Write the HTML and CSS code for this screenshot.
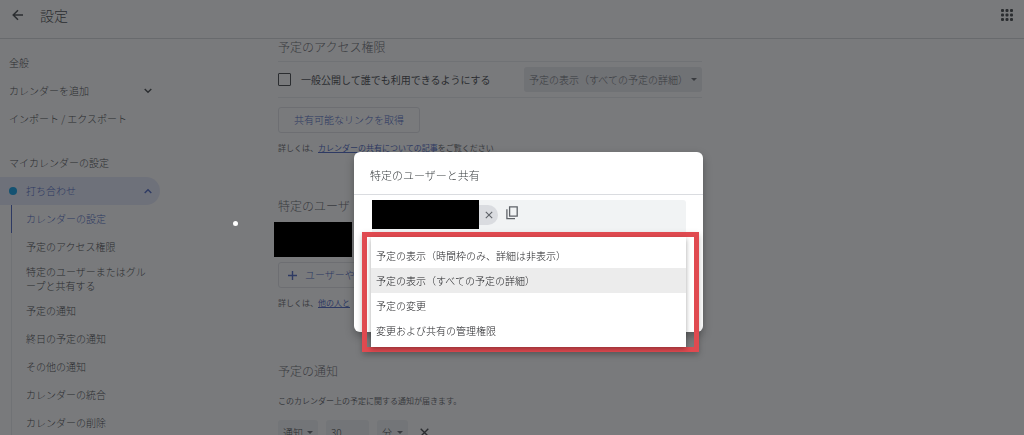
FILE: index.html
```html
<!DOCTYPE html>
<html lang="ja">
<head>
    <meta charset="UTF-8">
    <meta name="viewport" content="width=device-width, initial-scale=1.0">
    <title>設定</title>
    <link rel="stylesheet" href="styles.css">
</head>
<body>
    <header class="topbar">
        <button type="button" class="icon-button" aria-label="戻る">
            <svg width="12" height="12" viewBox="0 0 12 12"><path d="M11 6H1.5M6 1.2L1.2 6L6 10.8" fill="none" stroke="currentColor" stroke-width="1.5"/></svg>
        </button>
        <h1>設定</h1>
        <button type="button" class="icon-button apps" aria-label="アプリ">
            <svg width="12" height="12" viewBox="0 0 12 12" fill="currentColor">
                <rect x="0" y="0" width="3" height="3" rx="1"/><rect x="4.5" y="0" width="3" height="3" rx="1"/><rect x="9" y="0" width="3" height="3" rx="1"/>
                <rect x="0" y="4.5" width="3" height="3" rx="1"/><rect x="4.5" y="4.5" width="3" height="3" rx="1"/><rect x="9" y="4.5" width="3" height="3" rx="1"/>
                <rect x="0" y="9" width="3" height="3" rx="1"/><rect x="4.5" y="9" width="3" height="3" rx="1"/><rect x="9" y="9" width="3" height="3" rx="1"/>
            </svg>
        </button>
    </header>

    <div class="page">
        <nav class="sidebar">
            <h2 class="side-title">全般</h2>
            <button type="button" class="side-row">カレンダーを追加
                <svg class="chevron" width="8" height="6" viewBox="0 0 8 6"><path d="M0.7 1L4 4.3L7.3 1" fill="none" stroke="currentColor" stroke-width="1.4"/></svg>
            </button>
            <a class="side-row" href="#import">インポート / エクスポート</a>
            <h2 class="side-title my-calendars">マイカレンダーの設定</h2>
            <button type="button" class="side-row current">
                <span class="dot"></span>打ち合わせ
                <svg class="chevron" width="8" height="6" viewBox="0 0 8 6"><path d="M0.7 5L4 1.7L7.3 5" fill="none" stroke="currentColor" stroke-width="1.4"/></svg>
            </button>
            <ul class="sub-list">
                <li><a class="active" href="#settings">カレンダーの設定</a></li>
                <li><a href="#access">予定のアクセス権限</a></li>
                <li><a href="#share">特定のユーザーまたはグル<br>ープと共有する</a></li>
                <li><a href="#notice">予定の通知</a></li>
                <li><a href="#allday">終日の予定の通知</a></li>
                <li><a href="#other">その他の通知</a></li>
                <li><a href="#integrate">カレンダーの統合</a></li>
                <li><a href="#remove">カレンダーの削除</a></li>
            </ul>
        </nav>

        <main class="content">
            <section id="access">
                <h2>予定のアクセス権限</h2>
                <div class="public-row">
                    <input type="checkbox" id="public">
                    <label for="public">一般公開して誰でも利用できるようにする</label>
                    <div class="select-wrap public-select">
                        <select aria-label="公開の範囲" disabled>
                            <option>予定の表示（すべての予定の詳細）</option>
                        </select>
                    </div>
                </div>
                <button type="button" class="outline-button">共有可能なリンクを取得</button>
                <p class="note">詳しくは、<a href="#help">カレンダーの共有についての記事</a>をご覧ください</p>
            </section>

            <section id="share">
                <h2>特定のユーザ</h2>
                <div class="masked"></div>
                <button type="button" class="outline-button add-user">
                    <svg width="9" height="9" viewBox="0 0 9 9"><path d="M4.5 0V9M0 4.5H9" stroke="currentColor" stroke-width="1.4"/></svg>
                    ユーザーや
                </button>
                <p class="note">詳しくは、<a href="#help">他の人と</a></p>
            </section>

            <section id="notice">
                <h2>予定の通知</h2>
                <p class="note">このカレンダー上の予定に関する通知が届きます。</p>
                <div class="notice-row">
                    <div class="select-wrap"><select aria-label="通知方法"><option>通知</option></select></div>
                    <input type="text" aria-label="通知の時間" value="30">
                    <div class="select-wrap"><select class="unit" aria-label="単位"><option>分</option></select></div>
                    <button type="button" class="icon-button" aria-label="通知を削除">
                        <svg width="9" height="9" viewBox="0 0 9 9"><path d="M0.7 0.7L8.3 8.3M8.3 0.7L0.7 8.3" stroke="currentColor" stroke-width="1.4"/></svg>
                    </button>
                </div>
            </section>
        </main>
    </div>

    <div class="overlay">
        <div class="dialog" role="dialog" aria-labelledby="dialog-title">
            <h2 id="dialog-title">特定のユーザーと共有</h2>
            <div class="dialog-body">
                <div class="user-field">
                    <span class="redacted"></span>
                    <span class="chip">
                        <button type="button" class="icon-button" aria-label="削除">
                            <svg width="8" height="8" viewBox="0 0 8 8"><path d="M0.8 0.8L7.2 7.2M7.2 0.8L0.8 7.2" stroke="currentColor" stroke-width="1.1"/></svg>
                        </button>
                    </span>
                    <button type="button" class="icon-button copy" aria-label="コピー">
                        <svg width="12" height="14" viewBox="0 0 12 14"><path d="M3.6 0.9H11.2V10.1H3.6ZM0.9 3.2V12.6H9" fill="none" stroke="currentColor" stroke-width="1.3"/></svg>
                    </button>
                </div>
                <div class="menu-frame">
                    <div class="menu" role="listbox" aria-label="権限">
                        <button type="button" role="option">予定の表示（時間枠のみ、詳細は非表示）</button>
                        <button type="button" role="option" class="selected" aria-selected="true">予定の表示（すべての予定の詳細）</button>
                        <button type="button" role="option">予定の変更</button>
                        <button type="button" role="option">変更および共有の管理権限</button>
                    </div>
                </div>
            </div>
        </div>
    </div>
    <span class="pointer-dot"></span>
</body>
</html>
```

FILE: styles.css
```css
* {
    box-sizing: border-box;
}
body {
    margin: 0;
    height: 100vh;
    overflow: hidden;
    display: flex;
    flex-direction: column;
    background-color: #fff;
    color: #3c4043;
    font-family: "Noto Sans CJK JP", sans-serif;
    font-weight: 300;
    font-size: 10px;
    line-height: 14px;
}
h1, h2, p, ul {
    margin: 0;
    padding: 0;
    font-weight: 300;
}
button, input, select {
    font: inherit;
    color: inherit;
}
button {
    border: none;
    padding: 0;
    background: none;
    cursor: pointer;
}
svg {
    display: block;
}
a {
    color: inherit;
    text-decoration: none;
}

/* header */
.topbar {
    display: flex;
    align-items: center;
    flex: none;
    height: 39px;
    padding: 0 12px 8px;
    border-bottom: 1px solid #d5d7da;
}
.topbar h1 {
    margin-left: 16px;
    font-size: 14px;
    line-height: 20px;
}
.apps {
    margin-left: auto;
    margin-right: -1px;
}
.page {
    display: flex;
    flex: 1;
    min-height: 0;
}

/* sidebar */
.sidebar {
    flex: none;
    width: 278px;
    padding-top: 10px;
}
.side-title, .side-row {
    display: flex;
    align-items: center;
    width: 160px;
    height: 28px;
    padding: 0 8px 0 9px;
    font-size: 10px;
    text-align: left;
}
.my-calendars {
    margin-top: 16px;
}
.chevron {
    margin-left: auto;
}
.current {
    background-color: #e4e9fa;
    border-radius: 0 14px 14px 0;
    color: #4460c0;
}
.dot {
    width: 8px;
    height: 8px;
    margin-right: 9px;
    border-radius: 50%;
    background-color: #039be5;
}
.sub-list {
    width: 152px;
    margin-left: 11px;
    list-style: none;
}
.sub-list a {
    display: flex;
    align-items: center;
    min-height: 28px;
    padding: 4px 0 4px 14px;
    border-left: 1px solid #e8eaed;
}
.sub-list .active {
    color: #4460c0;
    border-color: #4460c0;
}

/* main column */
.content {
    flex: 0 1 424px;
}
.content h2 {
    font-size: 12px;
    line-height: 16px;
    color: #5f6368;
}
.public-row {
    display: flex;
    align-items: center;
    height: 37px;
    margin: 6px 0 9px;
    border-top: 1px solid #e8eaed;
    border-bottom: 1px solid #e8eaed;
    font-weight: 400;
}
.public-row input {
    appearance: none;
    width: 13px;
    height: 13px;
    margin: 0 10px 0 0;
    border: 1px solid #3c4043;
    border-radius: 1px;
}
.select-wrap {
    position: relative;
}
.select-wrap::after {
    content: "";
    position: absolute;
    top: 11px;
    right: 5px;
    border: 3px solid transparent;
    border-top-color: #5f6368;
    border-bottom: none;
}
.public-select {
    margin-left: auto;
}
select, .notice-row input {
    appearance: none;
    display: block;
    height: 25px;
    border: none;
    border-radius: 3px;
    background-color: #f1f3f4;
    padding: 0 14px 0 5px;
}
.public-select select {
    width: 178px;
    background-color: #e8eaed;
    color: #5f6368;
    font-weight: 300;
    opacity: 1;
}
.outline-button {
    display: block;
    height: 26px;
    padding: 0 15px;
    border: 1px solid #e0e2e6;
    border-radius: 3px;
    color: #4460c0;
}
.note {
    font-size: 8px;
    line-height: 12px;
    margin-top: 9px;
    font-weight: 400;
    color: #5f6368;
}
.note a {
    color: #4460c0;
    text-decoration: underline;
}
#share, #notice {
    padding-top: 44px;
}
#notice {
    padding-top: 54px;
}
#notice .note {
    margin-top: 16px;
}
.masked {
    position: relative;
    z-index: 5;
    width: 78px;
    height: 35px;
    margin: 8px 0 5px -4px;
    background-color: #000;
}
.add-user {
    display: flex;
    align-items: center;
    gap: 8px;
    width: 150px;
    padding: 0 9px;
}
.notice-row {
    display: flex;
    align-items: center;
    gap: 8px;
    margin-top: 13px;
}
.notice-row select {
    width: 40px;
}
.notice-row .unit {
    width: 31px;
}
.notice-row input {
    width: 43px;
}
.notice-row .icon-button {
    margin-left: 4px;
}

/* dialog */
.overlay {
    position: fixed;
    inset: 0;
    z-index: 2;
    display: flex;
    align-items: center;
    justify-content: center;
    padding: 49px 0 0 33px;
    background-color: rgba(32, 33, 36, 0.6);
}
.dialog {
    width: 349px;
    height: 180px;
    border-radius: 6px;
    background-color: #fff;
    box-shadow: 0 4px 10px rgba(0, 0, 0, 0.3);
}
.dialog h2 {
    padding: 15px 16px 10px;
    border-bottom: 1px solid #dadce0;
    font-size: 11px;
    line-height: 17px;
}
.dialog-body {
    position: relative;
    padding: 5px 17px 0 18px;
}
.user-field {
    display: flex;
    align-items: center;
    height: 32px;
    padding-bottom: 3px;
    border-radius: 3px 3px 0 0;
    background-color: #f1f3f4;
    color: #5f6368;
}
.redacted {
    width: 107px;
    height: 29px;
    background-color: #000;
}
.chip {
    display: flex;
    align-items: center;
    justify-content: flex-end;
    width: 19px;
    height: 20px;
    padding-right: 5px;
    border-radius: 0 10px 10px 0;
    background-color: #dadce0;
}
.copy {
    margin: 0 0 4px 8px;
}
/* the open menu covers the lower half of the dialog */
.menu-frame {
    position: absolute;
    top: 37px;
    left: 8px;
    right: 4px;
    padding: 0 8px 0 4px;
    border: 5px solid #e04a50;
    box-shadow: 0 3px 6px rgba(0, 0, 0, 0.25);
}
.menu {
    padding: 6px 0 4px;
    background-color: #fff;
    box-shadow: 0 2px 5px rgba(0, 0, 0, 0.35);
}
.menu button {
    display: block;
    width: 100%;
    height: 25px;
    padding: 0 5px;
    color: #202124;
    text-align: left;
}
.menu .selected {
    background-color: #ececec;
}
.pointer-dot {
    position: fixed;
    z-index: 5;
    left: 233px;
    top: 221px;
    width: 5px;
    height: 5px;
    border-radius: 50%;
    background-color: #fff;
}
```
